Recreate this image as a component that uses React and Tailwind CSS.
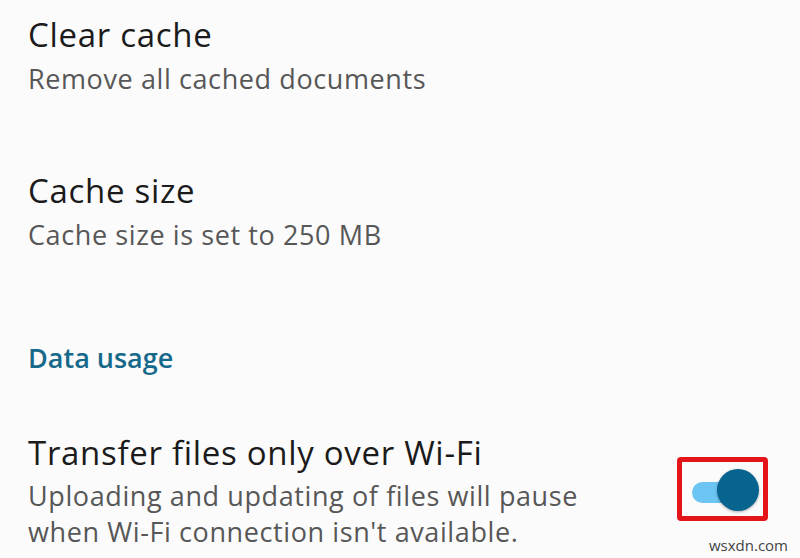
import React from 'react';

function SettingRow({ title, subtitle, className = '', subClass = 'mt-[6px]' }) {
  return (
    <div className={`flex flex-col ${className}`}>
      <div className="text-[33px] leading-[40px] tracking-[0.7px] text-[#1b1b1b]">{title}</div>
      <div className={`text-[27px] leading-[36px] tracking-[0.6px] text-[#575757] ${subClass}`}>{subtitle}</div>
    </div>
  );
}

function Toggle() {
  return (
    <div className="relative w-[91px] h-[64px] border-[5px] border-[#e3151b] rounded-[4px] mr-[32px] mt-[24px] shrink-0">
      <div className="absolute left-[10px] top-[20px] w-[50px] h-[21px] rounded-full bg-[#6cc5f2]" />
      <div className="absolute left-[35px] top-[7px] w-[42px] h-[42px] rounded-full bg-[#07648f] shadow-[0_1px_3px_rgba(0,0,0,0.3)]" />
    </div>
  );
}

export default function App() {
  return (
    <div
      className="relative w-[800px] h-[558px] overflow-hidden bg-[#fbfbfb] pl-[28px]"
      style={{ fontFamily: '"Open Sans", Roboto, sans-serif' }}
    >
      <SettingRow className="pt-[15px]" title="Clear cache" subtitle="Remove all cached documents" />
      <SettingRow className="mt-[74px]" title="Cache size" subtitle="Cache size is set to 250 MB" />
      <div className="mt-[89px] text-[27px] leading-[32px] font-semibold text-[#16698a]">Data usage</div>
      <div className="mt-[59px] flex items-start justify-between">
        <div className="flex flex-col">
          <div className="text-[33px] leading-[40px] tracking-[0.7px] text-[#1b1b1b]">Transfer files only over Wi-Fi</div>
          <div className="mt-[5px] text-[27px] leading-[36px] tracking-[0.6px] text-[#575757]">
            Uploading and updating of files will pause
            <br />
            when Wi-Fi connection isn't available.
          </div>
        </div>
        <Toggle />
      </div>
      <div className="absolute right-[12px] bottom-[2px] text-[15px] text-[#444]">wsxdn.com</div>
    </div>
  );
}
